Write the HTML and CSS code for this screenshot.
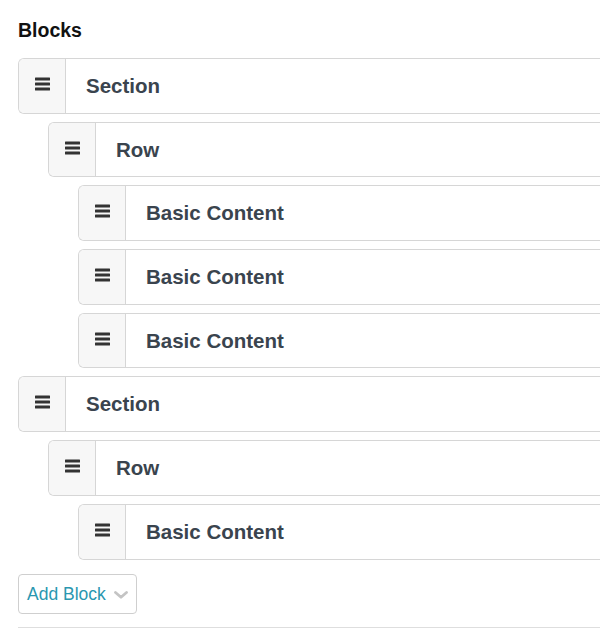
FILE: index.html
```html
<!DOCTYPE html>
<html>
<head>
<meta charset="utf-8">
<link rel="stylesheet" href="styles.css">
</head>
<body>
<div class="panel">
  <h2 class="title">Blocks</h2>
  <div class="tree">
    <div class="node">
      <div class="item"><span class="handle"><svg class="grip" viewBox="0 0 15 14" width="15" height="14"><rect x="0" y="0.5" width="15" height="3" rx="0.5"/><rect x="0" y="5.5" width="15" height="3" rx="0.5"/><rect x="0" y="10.5" width="15" height="3" rx="0.5"/></svg></span><span class="label">Section</span></div>
      <div class="children">
        <div class="node">
          <div class="item"><span class="handle"><svg class="grip" viewBox="0 0 15 14" width="15" height="14"><rect x="0" y="0.5" width="15" height="3" rx="0.5"/><rect x="0" y="5.5" width="15" height="3" rx="0.5"/><rect x="0" y="10.5" width="15" height="3" rx="0.5"/></svg></span><span class="label">Row</span></div>
          <div class="children">
            <div class="node"><div class="item"><span class="handle"><svg class="grip" viewBox="0 0 15 14" width="15" height="14"><rect x="0" y="0.5" width="15" height="3" rx="0.5"/><rect x="0" y="5.5" width="15" height="3" rx="0.5"/><rect x="0" y="10.5" width="15" height="3" rx="0.5"/></svg></span><span class="label">Basic Content</span></div></div>
            <div class="node"><div class="item"><span class="handle"><svg class="grip" viewBox="0 0 15 14" width="15" height="14"><rect x="0" y="0.5" width="15" height="3" rx="0.5"/><rect x="0" y="5.5" width="15" height="3" rx="0.5"/><rect x="0" y="10.5" width="15" height="3" rx="0.5"/></svg></span><span class="label">Basic Content</span></div></div>
            <div class="node"><div class="item"><span class="handle"><svg class="grip" viewBox="0 0 15 14" width="15" height="14"><rect x="0" y="0.5" width="15" height="3" rx="0.5"/><rect x="0" y="5.5" width="15" height="3" rx="0.5"/><rect x="0" y="10.5" width="15" height="3" rx="0.5"/></svg></span><span class="label">Basic Content</span></div></div>
          </div>
        </div>
      </div>
    </div>
    <div class="node">
      <div class="item"><span class="handle"><svg class="grip" viewBox="0 0 15 14" width="15" height="14"><rect x="0" y="0.5" width="15" height="3" rx="0.5"/><rect x="0" y="5.5" width="15" height="3" rx="0.5"/><rect x="0" y="10.5" width="15" height="3" rx="0.5"/></svg></span><span class="label">Section</span></div>
      <div class="children">
        <div class="node">
          <div class="item"><span class="handle"><svg class="grip" viewBox="0 0 15 14" width="15" height="14"><rect x="0" y="0.5" width="15" height="3" rx="0.5"/><rect x="0" y="5.5" width="15" height="3" rx="0.5"/><rect x="0" y="10.5" width="15" height="3" rx="0.5"/></svg></span><span class="label">Row</span></div>
          <div class="children">
            <div class="node"><div class="item"><span class="handle"><svg class="grip" viewBox="0 0 15 14" width="15" height="14"><rect x="0" y="0.5" width="15" height="3" rx="0.5"/><rect x="0" y="5.5" width="15" height="3" rx="0.5"/><rect x="0" y="10.5" width="15" height="3" rx="0.5"/></svg></span><span class="label">Basic Content</span></div></div>
          </div>
        </div>
      </div>
    </div>
  </div>
  <button class="add" type="button"><span class="add-text">Add Block</span><svg class="chev" viewBox="0 0 14 8" width="14" height="8"><path d="M1.5 1.5 L7 6.2 L12.5 1.5" fill="none" stroke="#c4c4c4" stroke-width="2.8" stroke-linecap="round" stroke-linejoin="round"/></svg></button>
  <div class="rule"></div>
</div>
</body>
</html>
```

FILE: styles.css
```css
html, body {
  margin: 0;
  padding: 0;
  background: #fff;
}
body {
  font-family: "Liberation Sans", Arial, sans-serif;
}
.panel {
  padding-left: 18px;
}
.title {
  margin: 19px 0 0 0;
  font-size: 19.5px;
  line-height: 22px;
  font-weight: 700;
  color: #111;
}
.tree {
  margin-top: 17px;
  display: flex;
  flex-direction: column;
  gap: 8px;
}
.node {
  display: flex;
  flex-direction: column;
  gap: 8px;
}
.children {
  display: flex;
  flex-direction: column;
  gap: 8px;
  padding-left: 30px;
}
.item {
  display: flex;
  align-items: stretch;
  height: 55.7px;
  box-sizing: border-box;
  border: 1px solid #d6d6d6;
  border-right: 0;
  border-radius: 6px 0 0 6px;
  background: #fff;
  overflow: hidden;
}
.handle {
  width: 47px;
  flex: none;
  display: flex;
  align-items: center;
  justify-content: center;
  background: #f7f7f7;
  border-right: 1px solid #d6d6d6;
  padding-bottom: 4px;
  box-sizing: border-box;
}
.grip {
  fill: #333;
  display: block;
}
.label {
  display: flex;
  align-items: center;
  padding-left: 20px;
  font-size: 20.5px;
  font-weight: 700;
  color: #3a444e;
}
.add {
  margin-top: 14px;
  display: flex;
  align-items: center;
  gap: 8px;
  height: 40px;
  box-sizing: border-box;
  padding: 1px 8px 0 8px;
  border: 1px solid #cfcfcf;
  border-radius: 4px;
  background: #fff;
  font-family: "Liberation Sans", Arial, sans-serif;
  font-size: 17.5px;
  color: #2a97b0;
}
.chev {
  display: block;
  margin-top: 2px;
}
.rule {
  margin-top: 13px;
  height: 1px;
  background: #dedede;
}
```
